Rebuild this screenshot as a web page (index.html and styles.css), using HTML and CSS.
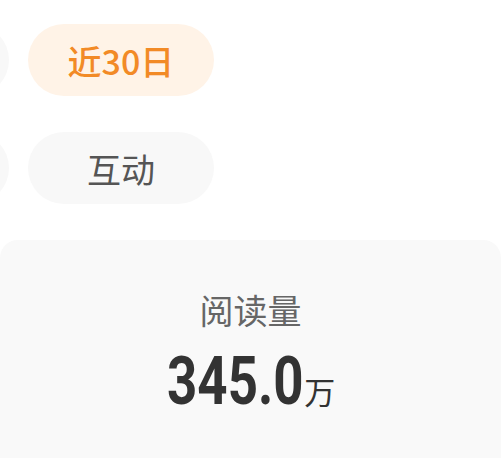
FILE: index.html
```html
<!DOCTYPE html>
<html lang="zh-CN">
<head>
    <meta charset="UTF-8">
    <meta name="viewport" content="width=device-width, initial-scale=1.0">
    <title>数据概览</title>
    <link rel="stylesheet" href="styles.css">
</head>
<body>

<div class="tabs">
    <div class="pill"></div>
    <div class="pill active">近30日</div>
</div>

<div class="tabs types">
    <div class="pill"></div>
    <div class="pill">互动</div>
</div>

<div class="card">
    <div class="label">阅读量</div>
    <div class="value"><span class="num">345.0</span><span class="unit">万</span></div>
</div>

</body>
</html>
```

FILE: styles.css
```css
body {
    font-family: "Noto Sans CJK SC", "Noto Sans", sans-serif;
    background-color: #ffffff;
    margin: 0;
    overflow: hidden;
}
.tabs {
    display: flex;
    gap: 19px;
    margin-top: 24px;
    margin-left: -177px;
}
.types {
    margin-top: 36px;
}
.pill {
    flex: none;
    width: 186px;
    height: 72px;
    border-radius: 36px;
    background-color: #f8f8f8;
    color: #555555;
    font-size: 34px;
    display: flex;
    align-items: center;
    justify-content: center;
}
.pill.active {
    background-color: #fff3e7;
    color: #f28a26;
    font-weight: 500;
}
.card {
    margin-top: 36px;
    height: 260px;
    border-radius: 18px;
    background-color: #f9f9f9;
    padding-top: 53px;
    box-sizing: border-box;
    text-align: center;
}
.label {
    font-size: 34px;
    line-height: 34px;
    color: #666666;
}
.value {
    margin-top: 22px;
    display: flex;
    justify-content: center;
    align-items: baseline;
    color: #333333;
}
.num {
    font-family: Roboto, sans-serif;
    font-weight: 700;
    font-size: 66px;
    line-height: 66px;
    display: inline-block;
    transform: scaleX(0.8);
    margin: 0 -16px;
}
.unit {
    font-size: 31px;
    margin-left: 0;
}
```
